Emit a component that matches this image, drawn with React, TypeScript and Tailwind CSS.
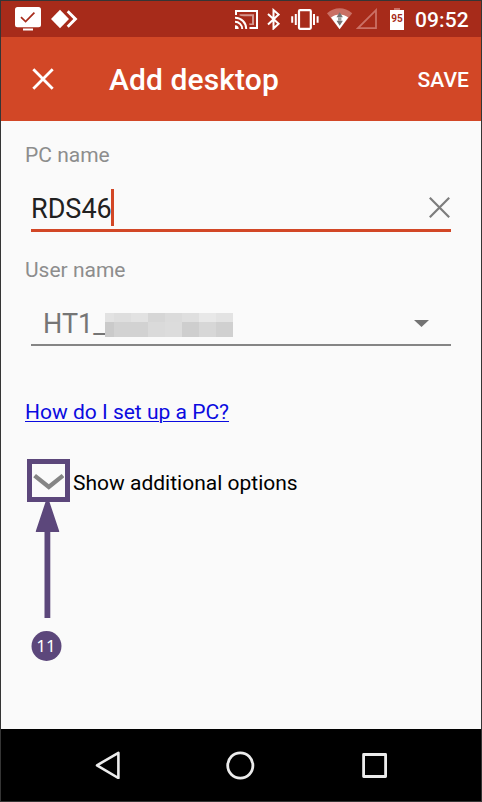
import React from "react";

function StatusBar() {
  return (
    <div className="flex h-9 shrink-0 items-center bg-[#a72b1a] text-white">
      <svg className="ml-3.5 h-[26px] w-[26px] shrink-0" viewBox="15 6 26 26" fill="currentColor">
        <rect x="15" y="7" width="26" height="20.3" rx="2.5" />
        <rect x="23" y="28.5" width="10" height="2" />
        <path d="M21 17.2l4.6 4.4 8.8-9" fill="none" stroke="#a72b1a" strokeWidth="1.7" />
      </svg>
      <svg className="ml-2.5 h-5 w-[27px] shrink-0" viewBox="51 9 27 20" fill="currentColor">
        <path d="M60 9.8l9 9.2-9 9.2L51 19z" />
        <path d="M66.7 12.2l2-2L77.5 19l-8.8 8.8-2-2 6.6-6.8z" />
      </svg>
      <svg className="ml-[157px] h-5 w-6 shrink-0" viewBox="235 9 24 20" fill="none" stroke="currentColor">
        <path d="M239.5 14.2H254V25h-4.5c-1-5-5-9-10-9.6z" fill="#d3968d" stroke="none" />
        <path d="M241 16.2h11v7.2h-3.6c-1.4-3.4-4-5.8-7.4-7z" fill="#a72b1a" stroke="none" />
        <path d="M236 15v-4h21v17h-7.5" strokeWidth="2" />
        <path d="M235 17.8A11 11 0 0 1 246.2 29M235 21.8a7.2 7.2 0 0 1 7.2 7.2" strokeWidth="2" />
        <path d="M235 25.3a3.7 3.7 0 0 1 3.7 3.7H235z" fill="currentColor" stroke="none" />
      </svg>
      <svg className="ml-2 h-[22px] w-[14px] shrink-0" viewBox="267 8 14 22" fill="none" stroke="currentColor" strokeWidth="2">
        <path d="M268 13.9l10.6 9.8-5.1 4.8V10.1l5.1 4.5L268 24.4" />
      </svg>
      <svg className="ml-2.5 h-[22px] w-7 shrink-0" viewBox="291 8 28 22" fill="none" stroke="currentColor">
        <rect x="299" y="10.2" width="11.8" height="18.6" rx="1" strokeWidth="2.2" />
        <path d="M292.2 16.2v6.6M295.8 14v11M314 14v11M317.6 16.2v6.6" strokeWidth="2" />
      </svg>
      <svg className="ml-2 h-[22px] w-[26px] shrink-0" viewBox="327 8 26 22" fill="currentColor">
        <path d="M327 13.2c7.8-6.6 17.4-6.6 25.2 0l-12.6 16z" fill="#c96f64" />
        <path d="M331 17.4c5-4 12.2-4 17.2 0l-8.6 11.8z" />
        <path d="M339.7 12.2l3.2 5h-6.4zM336.5 20.8h6.4l-3.2 5z" fill="#747474" />
        <path d="M338 17.2h3.4v3.6H338z" fill="#a0a0a0" />
      </svg>
      <svg className="ml-[3px] h-[22px] w-[22px] shrink-0" viewBox="356 8 22 22" fill="none" stroke="#cb7065" strokeWidth="1.8">
        <path d="M376 10.2v17.9h-18z" />
      </svg>
      <div className="ml-3 flex h-[23px] w-[14px] shrink-0 flex-col items-center">
        <span className="h-[2px] w-[6px] bg-[#cb7065]" />
        <span className="flex h-[20px] w-[14px] items-start justify-center bg-white pt-1 text-[10px] leading-none font-bold text-[#a72b1a]">
          95
        </span>
      </div>
      <span className="ml-[11px] pt-px text-[21px] leading-6 font-medium tracking-[0.1px]">09:52</span>
    </div>
  );
}

function AppBar() {
  return (
    <header className="flex h-[84px] shrink-0 items-center bg-[#d24726] pr-[12px] text-white">
      <svg className="ml-[31px] h-[22px] w-[22px]" viewBox="0 0 22 22" fill="none" stroke="currentColor" strokeWidth="2.8">
        <path d="M1.3 1.3l19.4 19.4M20.7 1.3L1.3 20.7" />
      </svg>
      <h1 className="ml-[55px] pt-0.5 text-[30px] leading-9 font-medium tracking-[0.1px]">Add desktop</h1>
      <button className="ml-auto pt-0.5 text-[21px] leading-6 font-medium tracking-[0.1px]">SAVE</button>
    </header>
  );
}

function RedactedName() {
  return (
    <span className="grid h-6 w-32 grid-cols-[9px_17px_17px_17px_17px_17px_17px_17px] grid-rows-[9px_15px]">
      <i className="bg-[#e2e2e2]" />
      <i className="bg-[#dedede]" />
      <i className="bg-[#e2e2e2]" />
      <i className="bg-[#d6d6d6]" />
      <i className="bg-[#dbdbdb]" />
      <i className="bg-[#dfdfdf]" />
      <i className="bg-[#e8e8e8]" />
      <i className="bg-[#e3e3e3]" />
      <i className="bg-[#cacaca]" />
      <i className="bg-[#d2d2d2]" />
      <i className="bg-[#d2d2d2]" />
      <i className="bg-[#dadada]" />
      <i className="bg-[#dcdcdc]" />
      <i className="bg-[#cecece]" />
      <i className="bg-[#d7d7d7]" />
      <i className="bg-[#d0d0d0]" />
    </span>
  );
}

function NavigationBar() {
  return (
    <nav className="flex h-[72px] shrink-0 items-center bg-black text-[#ececec]">
      <svg className="ml-[94px] h-[28px] w-[26px]" viewBox="95 751.5 26 28" fill="none" stroke="currentColor" strokeWidth="2.6" strokeLinejoin="round">
        <path d="M118.4 753.3v25.2L97 765.8z" />
      </svg>
      <svg className="ml-[104px] h-[30px] w-[30px]" viewBox="0 0 30 30" fill="none" stroke="currentColor" strokeWidth="2.8">
        <circle cx="15.3" cy="15.5" r="12.6" />
      </svg>
      <svg className="ml-[107px] h-[26px] w-[26px]" viewBox="0 0 26 26" fill="none" stroke="currentColor" strokeWidth="2.8" strokeLinejoin="round">
        <rect x="1.6" y="2.5" width="22" height="22" />
      </svg>
    </nav>
  );
}

export default function App() {
  return (
    <div className="flex h-[802px] w-[482px] flex-col overflow-hidden border border-[#353535] bg-[#fafafa] font-['Roboto',sans-serif]">
      <StatusBar />
      <AppBar />
      <main className="flex min-h-0 flex-1 flex-col items-start pt-[22px] pl-6">
        <label className="h-6 text-[21px] leading-6 text-[#8d8d8d]">PC name</label>
        <div className="mt-[22px] ml-1.5 flex h-[43px] w-[420px] items-start border-b-[3px] border-[#d24726]">
          <span className="pt-px text-[27px] leading-[38px] text-[#212121]">RDS46</span>
          <span className="-ml-px h-[37px] w-[3px] bg-[#d24726]" />
          <svg className="mt-2 mr-px ml-auto h-[21px] w-[21px]" viewBox="0 0 21 21" fill="none" stroke="#7d7d7d" strokeWidth="2.2">
            <path d="M.8.8l19.4 19.4M20.2.8L.8 20.2" />
          </svg>
        </div>
        <label className="mt-[26px] h-6 text-[21px] leading-6 text-[#8d8d8d]">User name</label>
        <div className="mt-[21px] ml-1.5 flex h-[43px] w-[420px] items-start border-b-2 border-[#858585] pl-3">
          <span className="pt-[2px] text-[27px] leading-[38px] text-[#757575]">HT1_</span>
          <span className="mt-2.5">
            <RedactedName />
          </span>
          <svg className="mt-[17px] mr-[22px] ml-auto h-[7px] w-[15px]" viewBox="0 0 15 7" fill="#737373">
            <path d="M0 0h15L7.5 7z" />
          </svg>
        </div>
        <a className="mt-[54px] h-6 text-[21px] leading-6 text-[#0b0be0] underline decoration-1 underline-offset-2">
          How do I set up a PC?
        </a>
        <div className="mt-[35px] flex items-start">
          <div className="ml-0.5 flex w-[43px] flex-col items-center">
            <div className="flex h-[43px] w-[43px] items-center justify-center border-[5px] border-[#5c477b]">
              <svg className="h-[17px] w-[31px] translate-y-px" viewBox="0 0 31 17" fill="none" stroke="#858585" strokeWidth="4.4">
                <path d="M1.6 2.6l14.2 11.3L30 2.6" />
              </svg>
            </div>
            <svg className="h-[116px] w-6 -translate-x-[1.5px]" viewBox="0 0 24 116" fill="#5c477b">
              <path d="M10 0h4l10 30h-9.2v86H9V30H0z" />
            </svg>
            <div className="mt-[13px] flex h-[30px] w-[30px] -translate-x-[2.5px] items-center justify-center rounded-full bg-[#5c477b] pb-0.5 font-['Noto_Sans',sans-serif] text-[17px] leading-none text-white">
              11
            </div>
          </div>
          <span className="ml-[3px] pt-3 text-[21px] leading-6 text-black">Show additional options</span>
        </div>
      </main>
      <NavigationBar />
    </div>
  );
}
